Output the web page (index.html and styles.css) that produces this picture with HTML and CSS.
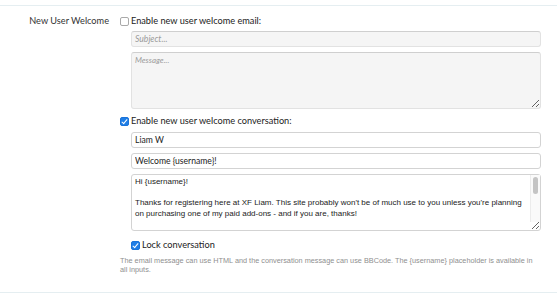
FILE: index.html
```html
<!DOCTYPE html>
<html>
<head>
<meta charset="utf-8">
<link rel="stylesheet" href="styles.css">
</head>
<body>
<div class="page">
  <div class="rule"></div>
  <div class="row">
    <div class="row-label">New User Welcome</div>
    <div class="row-body">
      <label class="check-line">
        <input type="checkbox" class="cb">
        <span>Enable new user welcome email:</span>
      </label>
      <div class="sub">
        <input type="text" class="field field-disabled" placeholder="Subject..." disabled>
        <textarea class="area area-disabled" placeholder="Message..." disabled></textarea>
      </div>
      <label class="check-line check-gap">
        <input type="checkbox" class="cb" checked>
        <span>Enable new user welcome conversation:</span>
      </label>
      <div class="sub sub-conv">
        <input type="text" class="field" value="Liam W">
        <input type="text" class="field" value="Welcome {username}!">
        <div class="area-wrap">
          <textarea class="area area-scroll">Hi {username}!

Thanks for registering here at XF Liam. This site probably won't be of much use to you unless you're planning
on purchasing one of my paid add-ons - and if you are, thanks!


If you have any questions, feel free to ask.

Liam</textarea>
          <div class="scrolltrack"><div class="scrollthumb"></div></div>
        </div>
        <label class="check-line lock">
          <input type="checkbox" class="cb" checked>
          <span>Lock conversation</span>
        </label>
      </div>
      <p class="help">The email message can use HTML and the conversation message can use BBCode. The {username} placeholder is available in all inputs.</p>
    </div>
  </div>
  <div class="rule-bottom"></div>
</div>
</body>
</html>
```

FILE: styles.css
```css
html, body {
  margin: 0;
  padding: 0;
  background: #ffffff;
}
.page {
  width: 557px;
  height: 300px;
  overflow: hidden;
  font-family: Lato, "Liberation Sans", Arial, sans-serif;
  color: #222;
}
.rule {
  height: 5px;
  border-bottom: 1px solid #e5eef1;
}
.row {
  display: grid;
  grid-template-columns: 109px 1fr;
  column-gap: 11px;
  padding: 8px 16px 0 0;
  height: 286px;
  box-sizing: border-box;
}
.row-label {
  text-align: right;
  font-size: 9.2px;
  line-height: 12px;
  color: #333;
  padding-top: 1px;
}
.row-body {
  display: flex;
  flex-direction: column;
}
.check-line {
  display: flex;
  align-items: center;
  gap: 2px;
  font-size: 9.2px;
  line-height: 12px;
  height: 12px;
  color: #222;
  margin-top: 1px;
}
.check-gap {
  margin-top: 6px;
}
.cb {
  appearance: none;
  -webkit-appearance: none;
  width: 9px;
  height: 9px;
  margin: 0;
  border: 1px solid #a9a9a9;
  border-radius: 2px;
  background: #fff;
  flex: none;
  position: relative;
}
.cb:checked {
  border-color: #1a73d9;
  background: #1f7ee6;
}
.cb:checked::after {
  content: "";
  position: absolute;
  left: 2px;
  top: 0px;
  width: 2px;
  height: 5px;
  border: solid #fff;
  border-width: 0 1.5px 1.5px 0;
  transform: rotate(40deg);
}
.sub {
  display: flex;
  flex-direction: column;
  gap: 5px;
  padding-left: 11px;
  margin-top: 4px;
}
.sub-conv {
  margin-top: 5px;
}
.field {
  box-sizing: border-box;
  height: 16px;
  width: 100%;
  margin: 0;
  padding: 0 3px;
  border: 1px solid #d3d3d3;
  border-radius: 3px;
  font-family: Lato, "Liberation Sans", Arial, sans-serif;
  font-size: 8.6px;
  color: #222;
  background: #fff;
  outline: none;
}
.field-disabled {
  background: #f5f5f5;
  border-color: #e2e2e2;
  border-top-color: #cfcfcf;
}
.field::placeholder, .area::placeholder {
  color: #9a9a9a;
  font-style: italic;
}
.area {
  box-sizing: border-box;
  height: 57px;
  width: 100%;
  margin: 0;
  padding: 2px 3px;
  border: 1px solid #d3d3d3;
  border-radius: 3px;
  font-family: "Liberation Sans", Arial, sans-serif;
  font-size: 8px;
  line-height: 10.5px;
  color: #222;
  background: #fff;
  resize: vertical;
  outline: none;
  display: block;
}
.area-disabled {
  background: #f5f5f5;
  border-color: #e2e2e2;
  border-top-color: #cfcfcf;
  font-family: Lato, "Liberation Sans", Arial, sans-serif;
}
.area-wrap {
  position: relative;
}
.area-scroll {
  white-space: pre;
  overflow: hidden;
  padding-right: 14px;
}
.scrolltrack {
  position: absolute;
  top: 1px;
  right: 1px;
  width: 9px;
  bottom: 9px;
  background: #fafafa;
  border-left: 1px solid #ececec;
}
.scrollthumb {
  position: absolute;
  top: 2px;
  left: 2px;
  width: 5px;
  height: 17px;
  border-radius: 3px;
  background: #c4c4c4;
}
.lock {
  margin-top: 3px;
}
.help {
  margin: 5px 0 0;
  font-family: "Liberation Sans", Arial, sans-serif;
  font-size: 7.3px;
  line-height: 9px;
  color: #8f8f8f;
}
.rule-bottom {
  height: 0;
  border-top: 1px solid #e5eef1;
}
```
